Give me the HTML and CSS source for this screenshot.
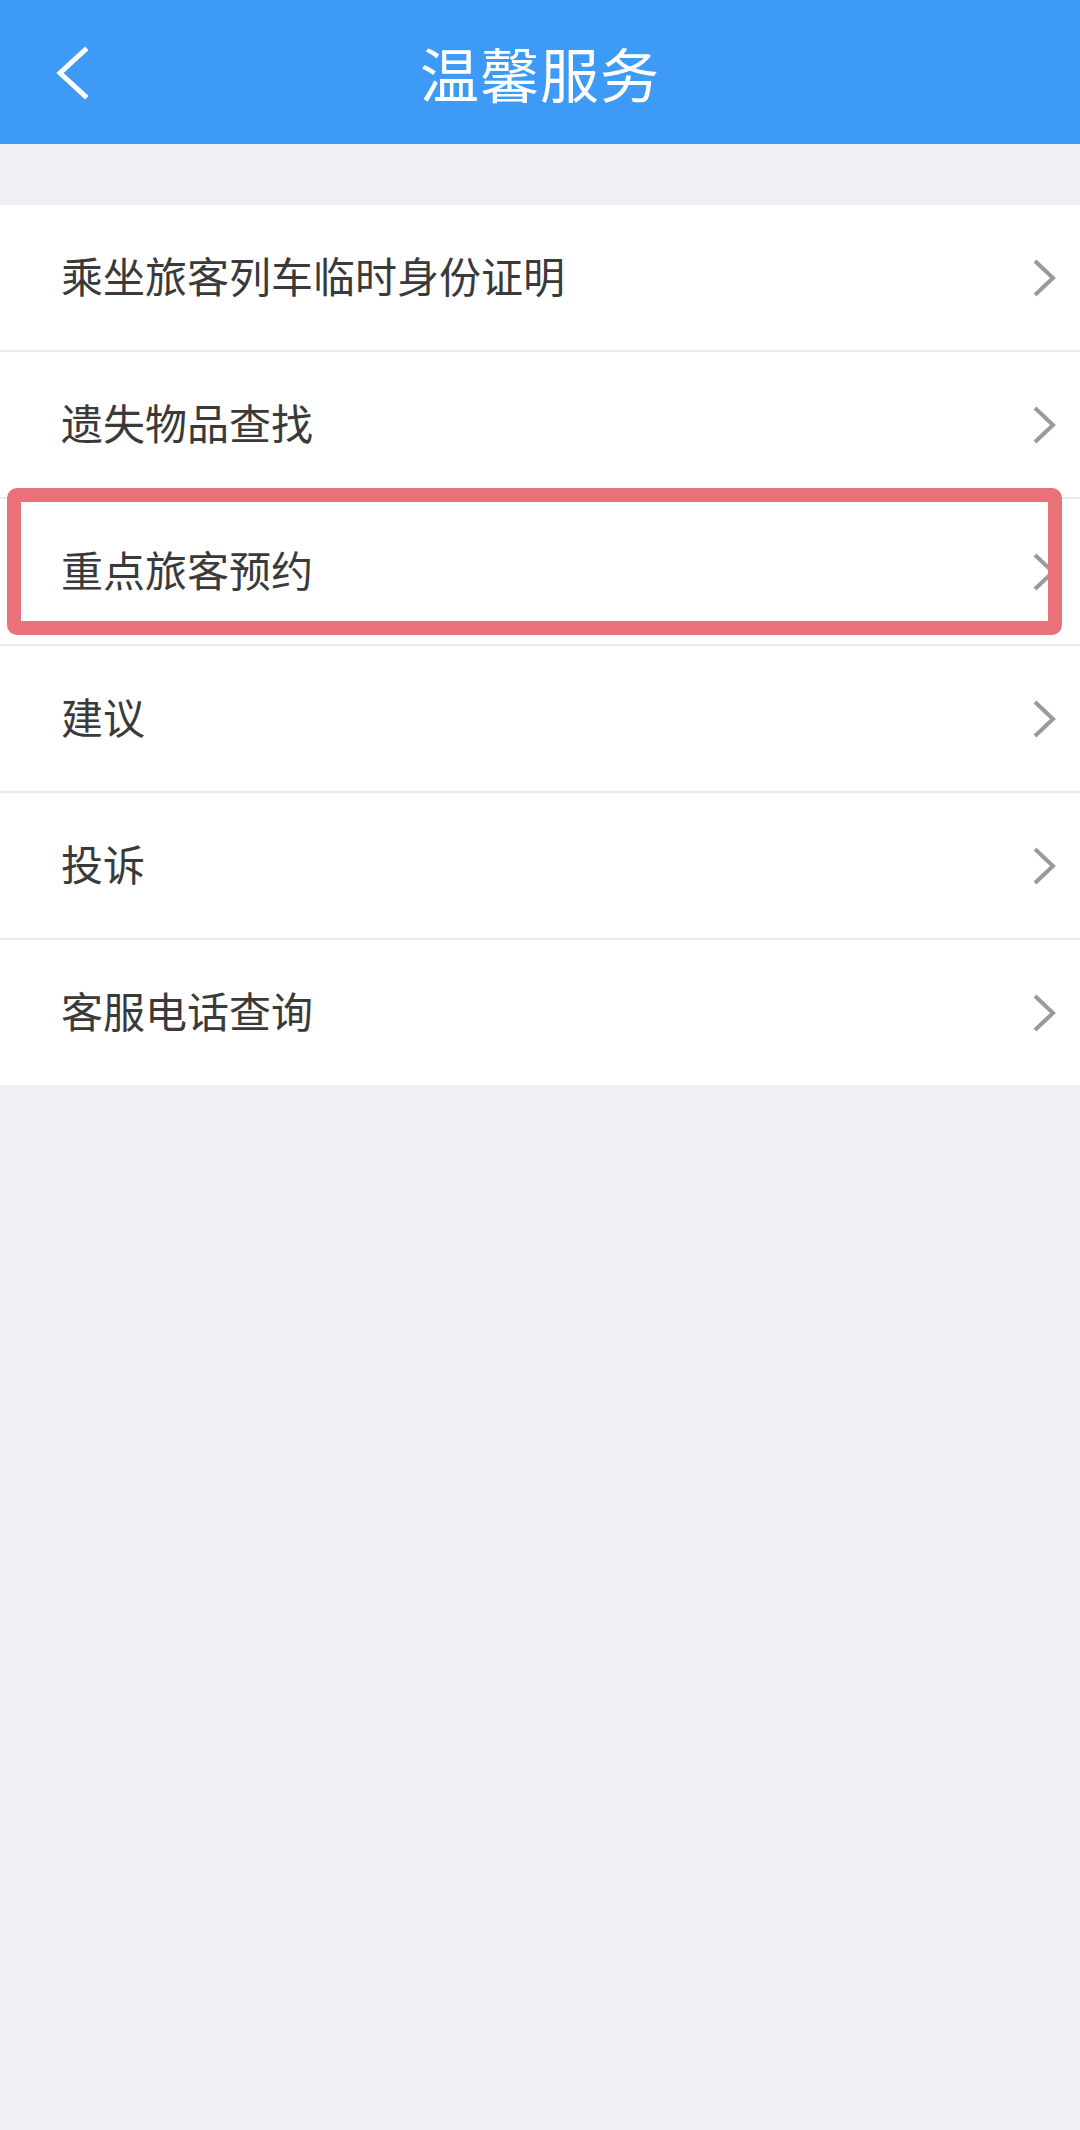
FILE: index.html
```html
<!DOCTYPE html>
<html lang="zh">
<head>
    <meta charset="UTF-8">
    <meta name="viewport" content="width=device-width, initial-scale=1.0">
    <title>温馨服务</title>
    <link rel="stylesheet" href="styles.css">
</head>
<body>
    <div class="header">
        <a class="back-btn" href="#">
            <svg width="40" height="60" viewBox="0 0 40 60">
                <polyline points="33,4 8,27 33,50" fill="none" stroke="#ffffff" stroke-width="5" stroke-linecap="square" />
            </svg>
        </a>
        <h1>温馨服务</h1>
    </div>

    <div class="menu-list">
        <div class="menu-item">
            <span>乘坐旅客列车临时身份证明</span>
            <svg class="arrow" viewBox="0 0 30 40"><polyline points="7,3 25,20 7,37" /></svg>
        </div>
        <div class="menu-item">
            <span>遗失物品查找</span>
            <svg class="arrow" viewBox="0 0 30 40"><polyline points="7,3 25,20 7,37" /></svg>
        </div>
        <div class="menu-item">
            <span>重点旅客预约</span>
            <svg class="arrow" viewBox="0 0 30 40"><polyline points="7,3 25,20 7,37" /></svg>
            <!-- 标注框 -->
            <div class="mark-box"></div>
        </div>
        <div class="menu-item">
            <span>建议</span>
            <svg class="arrow" viewBox="0 0 30 40"><polyline points="7,3 25,20 7,37" /></svg>
        </div>
        <div class="menu-item">
            <span>投诉</span>
            <svg class="arrow" viewBox="0 0 30 40"><polyline points="7,3 25,20 7,37" /></svg>
        </div>
        <div class="menu-item">
            <span>客服电话查询</span>
            <svg class="arrow" viewBox="0 0 30 40"><polyline points="7,3 25,20 7,37" /></svg>
        </div>
    </div>
</body>
</html>
```

FILE: styles.css
```css
:root {
    --header-bg: #3d9af7;
    --page-bg: #efeff4;
    --item-bg: #ffffff;
    --text-color: #3a3a3a;
    --line-color: #ececec;
    --arrow-color: #9a9a9a;
    --mark-color: #e8717a;
}

body {
    margin: 0;
    padding: 0;
    min-height: 2130px;
    background-color: var(--page-bg);
    font-family: "Noto Sans CJK SC", "Noto Sans", sans-serif;
    color: var(--text-color);
}

.header {
    height: 144px;
    background-color: var(--header-bg);
    display: flex;
    align-items: center;
    justify-content: center;
    position: relative;
}

.header h1 {
    margin: 0;
    color: #ffffff;
    font-size: 59px;
    font-weight: normal;
    letter-spacing: 1px;
}

.back-btn {
    position: absolute;
    left: 52px;
    top: 46px;
    display: block;
    width: 40px;
    height: 60px;
}

.menu-list {
    margin-top: 61px;
    background-color: var(--item-bg);
}

.menu-item {
    height: 145px;
    padding: 0 22px 0 61px;
    display: flex;
    align-items: center;
    justify-content: space-between;
    border-top: 2px solid var(--line-color);
    position: relative;
    font-size: 42px;
}

.menu-item span {
    margin-top: -6px;
}

.menu-item:first-child {
    border-top: none;
}

.arrow {
    width: 30px;
    height: 40px;
}

.arrow polyline {
    fill: none;
    stroke: var(--arrow-color);
    stroke-width: 4;
}

.mark-box {
    position: absolute;
    left: 7px;
    right: 18px;
    top: -11px;
    height: 119px;
    border: 14px solid var(--mark-color);
    border-radius: 10px;
}
```
